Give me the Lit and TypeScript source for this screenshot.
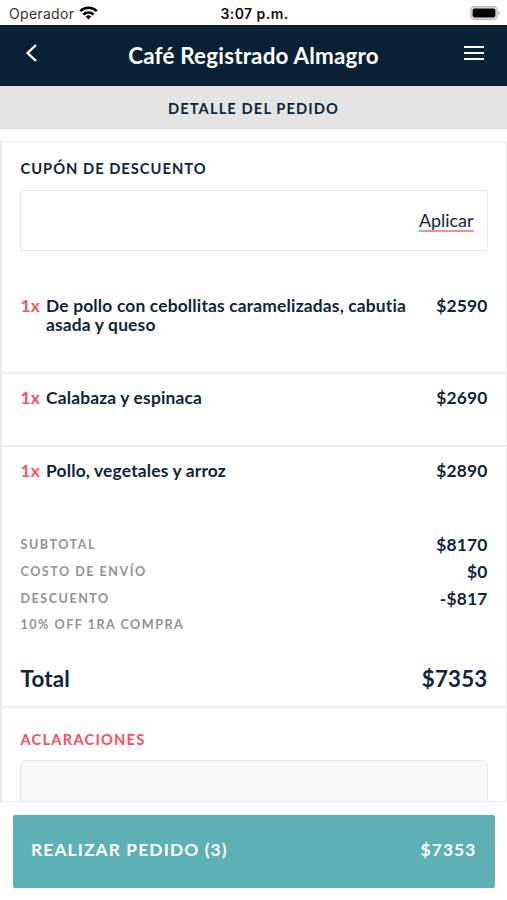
import { LitElement, html, css } from "lit";
import { customElement, property } from "lit/decorators.js";

interface Item {
  qty: number;
  name: string;
  price: number;
}

const items: Item[] = [
  { qty: 1, name: "De pollo con cebollitas caramelizadas, cabutia asada y queso", price: 2590 },
  { qty: 1, name: "Calabaza y espinaca", price: 2690 },
  { qty: 1, name: "Pollo, vegetales y arroz", price: 2890 },
];

const charges = [
  { label: "SUBTOTAL", value: "$8170" },
  { label: "COSTO DE ENVÍO", value: "$0" },
  { label: "DESCUENTO", value: "-$817" },
  { label: "10% OFF 1RA COMPRA", value: "" },
];

@customElement("status-bar")
class StatusBar extends LitElement {
  static styles = css`
    :host {
      display: grid;
      grid-template-columns: 1fr auto 1fr;
      align-items: center;
      height: 25px;
      padding: 2px 7px 0 9px;
      box-sizing: border-box;
      font-family: Inter, "Liberation Sans", sans-serif;
      font-size: 14px;
      line-height: 18px;
      color: #111;
    }
    .carrier { display: flex; align-items: center; gap: 5px; color: #333; }
    .name { letter-spacing: 0.3px; }
    .time { font-weight: 600; font-size: 14px; letter-spacing: 0.45px; }
    .battery { justify-self: end; display: block; margin: -1px -1px 0 0; }
    .wifi { display: block; margin-top: -2px; }
  `;
  render() {
    return html`
      <div class="carrier">
        <span class="name">Operador</span>
        <svg class="wifi" width="19" height="14" viewBox="0 0 19 14" fill="none" stroke="#000" stroke-width="2.5">
          <path d="M1.2 5.2a12 12 0 0 1 16.6 0" />
          <path d="M4.3 8.5a7.5 7.5 0 0 1 10.4 0" />
          <path d="M9.5 13.4 6.7 10.6a4 4 0 0 1 5.6 0z" fill="#000" stroke="none" />
        </svg>
      </div>
      <span class="time">3:07 p.m.</span>
      <svg class="battery" width="31" height="14" viewBox="0 0 31 14">
        <rect x="0.8" y="0.7" width="26.4" height="12.6" rx="3.6" fill="#e8e8e8" stroke="#bdbdbd" stroke-width="1.4" />
        <rect x="2.6" y="2.4" width="22.8" height="9.2" rx="2" fill="#000" />
        <path d="M28.4 4.9q1.6.7 1.6 2.1t-1.6 2.1z" fill="#bdbdbd" />
      </svg>
    `;
  }
}

@customElement("order-item")
class OrderItem extends LitElement {
  @property({ attribute: false }) item!: Item;
  static styles = css`
    :host {
      display: grid;
      grid-template-columns: 25.5px 1fr auto;
      font-size: 17.4px;
      line-height: 18.5px;
      font-weight: 700;
      letter-spacing: 0.17px;
      font-variant-ligatures: none;
      padding: 0 18.5px 0 18.5px;
    }
    .qty { color: #f9525d; }
    .name { max-width: 368px; }
  `;
  render() {
    const { qty, name, price } = this.item;
    return html`<span class="qty">${qty}x</span><span class="name">${name}</span><span class="price">$${price}</span>`;
  }
}

@customElement("app-root")
class AppRoot extends LitElement {
  static styles = css`
    :host {
      display: flex;
      flex-direction: column;
      height: 900px;
      overflow: hidden;
      background: #fff;
      color: #10253a;
      font-family: Lato, "Open Sans", sans-serif;
      font-variant-ligatures: none;
    }
    .header {
      display: grid;
      grid-template-columns: 44px 1fr 44px;
      align-items: center;
      height: 61px;
      flex: none;
      background: #0a2135;
      color: #fff;
    }
    .back { margin: -5px 0 0 25px; display: block; }
    .menu { margin: -5px 0 0 1px; display: block; }
    .title { text-align: center; font-size: 22.4px; line-height: 26px; font-weight: 700; letter-spacing: 0.2px; }
    .subtitle {
      flex: none;
      box-sizing: border-box;
      height: 43px;
      padding-top: 1px;
      line-height: 43px;
      background: #e4e4e4;
      text-align: center;
      font-size: 14.7px;
      font-weight: 700;
      letter-spacing: 1.1px;
    }
    .card {
      flex: none;
      display: flex;
      flex-direction: column;
      box-sizing: border-box;
      height: 661px;
      margin-top: 12px;
      overflow: hidden;
      border: 1px solid #ececec;
      border-left-width: 2px;
    }
    .heading { font-size: 14.7px; line-height: 18px; font-weight: 700; padding: 0 18.5px; }
    .coupon-title { margin-top: 17px; letter-spacing: 1px; }
    .coupon {
      display: flex;
      flex: none;
      align-items: center;
      justify-content: flex-end;
      box-sizing: border-box;
      height: 61px;
      margin: 13px 18.5px 0 18px;
      padding: 1px 13px 0;
      border: 1px solid #e9e9e9;
      border-radius: 3px;
    }
    .apply {
      font-size: 17.9px;
      line-height: 20px;
      height: 20px;
      border-bottom: 2px solid #fb8c92;
    }
    .row { box-sizing: border-box; flex: none; border-bottom: 2px solid #f0f0f0; }
    .row-first { height: 123px; padding-top: 46px; }
    .row-mid { height: 73px; padding-top: 15px; }
    .row-last { height: 73px; padding-top: 15px; border-bottom: 0; }
    .charges { display: flex; flex-direction: column; padding: 12px 18.5px 0 18.5px; }
    .charge { display: flex; justify-content: space-between; height: 26.8px; line-height: 26px; }
    .label { font-size: 12.6px; font-weight: 700; letter-spacing: 1.5px; color: #929292; }
    .value { font-size: 17.4px; font-weight: 700; letter-spacing: 0.17px; }
    .total {
      display: flex;
      justify-content: space-between;
      box-sizing: border-box;
      flex: none;
      height: 69px;
      padding: 26px 18.5px 0 18.5px;
      font-size: 22.3px;
      line-height: 27px;
      font-weight: 700;
      letter-spacing: 0.2px;
      border-bottom: 2px solid #f0f0f0;
    }
    .notes-title { margin-top: 22px; letter-spacing: 1.2px; color: #f9525d; }
    .notes {
      flex: none;
      height: 80px;
      margin: 12px 18.5px 0 18px;
      background: #f8f8f8;
      border: 1px solid #e8e8e8;
      border-radius: 6px;
      box-sizing: border-box;
    }
    .order {
      display: flex;
      flex: none;
      align-items: center;
      justify-content: space-between;
      box-sizing: border-box;
      height: 73px;
      margin: 12.5px 12.5px 0 13px;
      padding: 0 18px 3px;
      border-radius: 2px;
      background: #5db1b5;
      color: #fff;
      font-size: 17.4px;
      font-weight: 700;
      letter-spacing: 1.1px;
    }
  `;

  render() {
    const rowClass = ["row row-first", "row row-mid", "row row-last"];
    return html`
      <status-bar></status-bar>
      <header class="header">
        <svg class="back" width="13" height="20" viewBox="0 0 13 20" fill="none" stroke="#fff" stroke-width="2.4">
          <path d="M11 2 2.6 10 11 18" />
        </svg>
        <span class="title">Café Registrado Almagro</span>
        <svg class="menu" width="20" height="16" viewBox="0 0 20 16" stroke="#fff" stroke-width="2">
          <path d="M0 2h20M0 8h20M0 14h20" />
        </svg>
      </header>
      <div class="subtitle">DETALLE DEL PEDIDO</div>
      <main class="card">
        <div class="heading coupon-title">CUPÓN DE DESCUENTO</div>
        <div class="coupon"><span class="apply">Aplicar</span></div>
        ${items.map((item, i) => html`<div class=${rowClass[i]}><order-item .item=${item}></order-item></div>`)}
        <div class="charges">
          ${charges.map(
            (c) => html`<div class="charge"><span class="label">${c.label}</span><span class="value">${c.value}</span></div>`
          )}
        </div>
        <div class="total"><span>Total</span><span>$7353</span></div>
        <div class="heading notes-title">ACLARACIONES</div>
        <div class="notes"></div>
      </main>
      <div class="order"><span>REALIZAR PEDIDO (3)</span><span>$7353</span></div>
    `;
  }
}
